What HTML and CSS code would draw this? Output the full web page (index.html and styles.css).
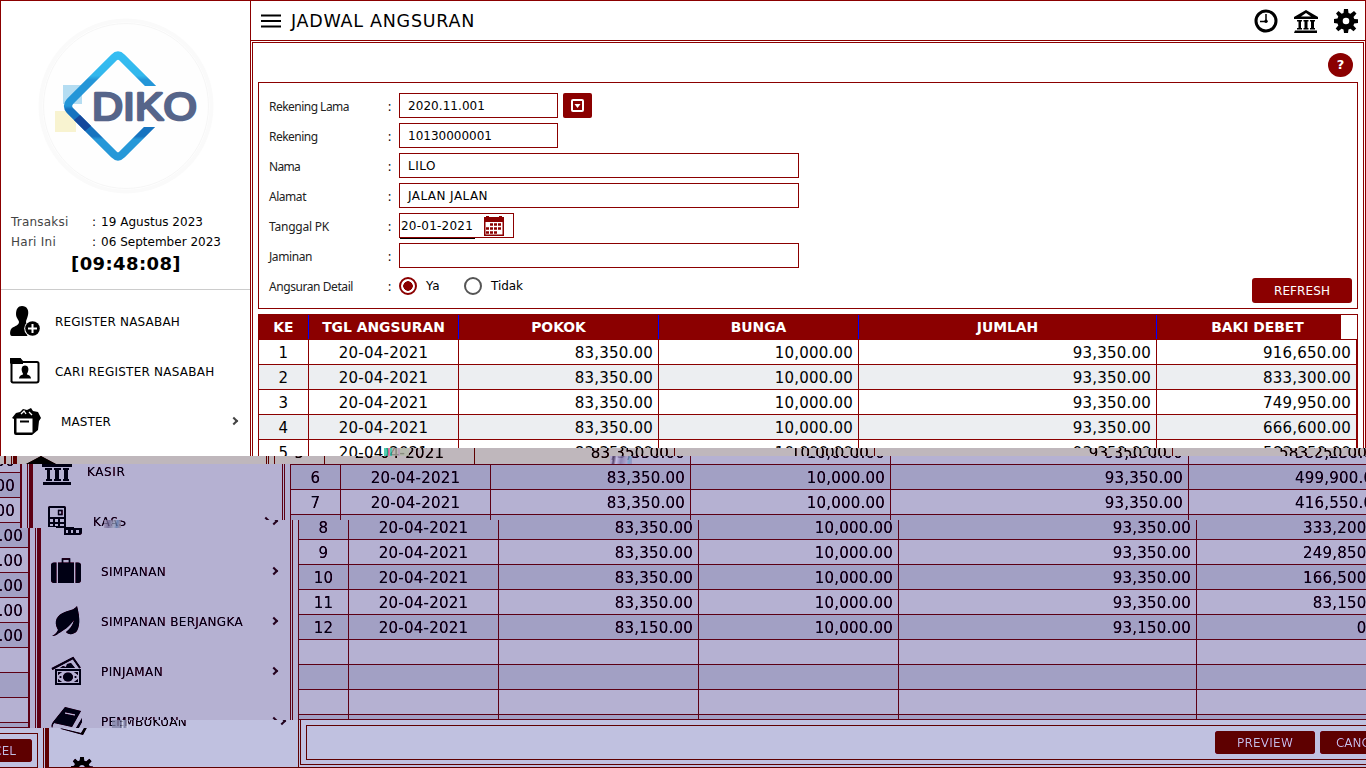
FILE: index.html
```html
<!DOCTYPE html>
<html lang="id">
<head>
<meta charset="utf-8">
<title>Jadwal Angsuran</title>
<link rel="stylesheet" href="styles.css">
</head>
<body>
<svg class="defs" width="0" height="0">
  <filter id="grey" color-interpolation-filters="sRGB" x="0" y="0" width="1" height="1"><feComponentTransfer><feFuncR type="table" tableValues="0 .12 .34 .5 .75"/><feFuncG type="table" tableValues="0 0 .22 .47 .72"/><feFuncB type="table" tableValues="0 0 .24 .49 .74"/></feComponentTransfer></filter>
  <filter id="violet" color-interpolation-filters="sRGB" x="0" y="0" width="1" height="1"><feComponentTransfer><feFuncR type="table" tableValues="0 .12 .34 .46 .71"/><feFuncG type="table" tableValues="0 0 .2 .445 .695"/><feFuncB type="table" tableValues="0.08 .1 .33 .575 .825"/></feComponentTransfer></filter>
  <filter id="pale" color-interpolation-filters="sRGB" x="0" y="0" width="1" height="1"><feComponentTransfer><feFuncR type="table" tableValues="0 .12 .34 .51 .755"/><feFuncG type="table" tableValues="0 0 .26 .51 .76"/><feFuncB type="table" tableValues="0 .1 .38 .63 .88"/></feComponentTransfer></filter>
</svg>
<main class="wall"></main>

<template id="screen">
<div class="screen">
  <aside class="side">
    <svg class="logo" viewBox="1 1 249 210">
      <defs>
        <clipPath id="cut"><path d="M50 40H170V86H120V127H170V175H50Z"/></clipPath>
        <linearGradient id="blue" x1="0" y1="0" x2="0" y2="1"><stop offset="0" stop-color="#35bdf2"/><stop offset=".2" stop-color="#32b7ec"/><stop offset=".24" stop-color="#2496d8"/><stop offset=".5" stop-color="#2496d8"/><stop offset=".53" stop-color="#1673bf"/><stop offset=".8" stop-color="#1673bf"/><stop offset=".83" stop-color="#2698d8"/><stop offset="1" stop-color="#2698d8"/></linearGradient>
      </defs>
      <circle cx="126" cy="106" r="85.500" fill="none" stroke="#fafafa" stroke-width="4"/>
      <circle cx="126" cy="106" r="82.500" fill="#fefefe" stroke="#f6f6f6" stroke-width="1"/>
      <rect x="63" y="85" width="19" height="19" fill="#b5ddf2"/>
      <rect x="55" y="111" width="21" height="21" fill="#f8f3d0"/>
      <g clip-path="url(#cut)">
        <path d="M114 57.500Q118 53.500 122 57.500L166 101.500Q170 106 166 110.500L122 154.500Q118 158.500 114 154.500L70 110.500Q66 106 70 101.500Z" fill="none" stroke="url(#blue)" stroke-width="8"/>
        <path d="M74 120l6-5 11 11-6 5z" fill="#14479c"/>
      </g>
      <text class="t brand" x="92" y="120" textLength="105" lengthAdjust="spacingAndGlyphs">DIKO</text>
    </svg>
    <div class="info"><span class="t dim" data-w="57.500">Transaksi</span><span class="t">:</span><span class="t" data-w="102">19 Agustus 2023</span></div>
    <div class="info"><span class="t dim" data-w="45">Hari Ini</span><span class="t">:</span><span class="t" data-w="120">06 September 2023</span></div>
    <div class="time"><span class="t" data-w="110">[09:48:08]</span></div>
    <nav class="menu">
      <div class="item"><svg viewBox="0 0 30 30"><path d="M12 0c5 0 7 4 6 9-.5 3-2 5-2 7 0 2 4 3 6 5l-5 9H2c-3 0-2-7 0-8 3-2 7-3 7-6 0-2-3-4-3-8 0-5 2-8 6-8z"/><circle cx="22.500" cy="22.500" r="8.300" fill="#fff"/><circle cx="22.500" cy="22.500" r="7.300"/><path d="M22.500 18v9M18 22.500h9" stroke="#fff" stroke-width="2"/></svg><span class="t" data-w="125">REGISTER NASABAH</span></div>
      <div class="item"><svg viewBox="0 0 30 30"><path d="M1.500 26V4q0-1 1-1H10l2.500 3H27q1.500 0 1.500 1.500V24.500q0 2-2 2H3q-1.500 0-1.500-2" fill="none" stroke="#000" stroke-width="2"/><path d="M0 7V2h10l3 4v2H1z"/><path d="M15 9.500c3 0 4 3 3 6-.5 2-1.500 2-1 3 2 .8 4 1.500 4 4H9c0-2.500 2-3.200 4-4 .5-1-.5-1-1-3-1-3 0-6 3-6z"/></svg><span class="t" data-w="159.500">CARI REGISTER NASABAH</span></div>
      <div class="item sub"><svg viewBox="0 0 30 30"><path d="M1 12l4-5 4-1 3-3 4 1 4-2 2 3 5 1 3 6-2 3-1 9-6 5H5Q3 29 3 27V13z"/><path d="M10 8l3-3 2 3M18 6l3 3" stroke="#fff" fill="none" stroke-width="1.300"/><path d="M5.500 12.500H21.500V26.500H5.500z" fill="#fff"/><path d="M9 14.500h9v2H9z"/></svg><span class="t" data-w="50">MASTER</span><i class="chev"></i></div>
      <div class="item"><svg viewBox="0 0 30 30"><path d="M15 0L30 8v3H0V8zM3 12h7v2H8v9h2v2H4v-2h1v-9H3zM12 12h7v2h-2v9h2v2h-7v-2h1v-9h-1zM21 12h6v2h-1v9h1v2h-6v-2h1v-9h-1zM1 26h28v3H1z"/></svg><span class="t" data-w="38.500">KASIR</span></div>
      <div class="item sub"><svg viewBox="0 0 30 30"><path d="M5 1.500Q5 0 7 0H21Q23 0 23 2V21H31V26Q31 29 28 29H13V21H5z"/><path d="M7 2H21V11H7z" fill="#fff"/><path d="M15.500 4.500h3.500v4h-3.500z" fill="#fff" stroke="#000" stroke-width="1.300"/><path d="M7 13h3v3H7zm5 0h3v3h-3zm5 0h4v3h-4zM7 18h3v2H7zm5 0h3v2h-3zm5 0h4v2h-4zM15 24h2v3h-2zm5 0h2v3h-2zm5 0h3v3h-3z" fill="#fff"/></svg><span class="t" data-w="26">KAS</span><i class="chev"></i></div>
      <div class="item sub"><svg viewBox="0 0 30 30"><path d="M11.500 7V3h7v4" fill="none" stroke="#000" stroke-width="1.500"/><path d="M3 6.500H5.500V27H3Q0 27 0 24V9.500Q0 6.500 3 6.500zM7 6.500H23V27H7zM24.500 6.500H27Q30 6.500 30 9.500V24Q30 27 27 27H24.500z"/></svg><span class="t" data-w="65">SIMPANAN</span><i class="chev"></i></div>
      <div class="item sub"><svg viewBox="0 0 30 30"><path d="M26 0C28 8 30 18 26 25 23 29 17 29 15 26 19 23 22 19 23 14 18 21 12 25 8 27 6 29 4 30 1 30 5 28 6 26 7 24 2 15 6 9 14 6 19 4 23 4 26 0z"/></svg><span class="t" data-w="142">SIMPANAN BERJANGKA</span><i class="chev"></i></div>
      <div class="item sub"><svg viewBox="0 0 30 30"><path d="M1 13L22 2l7 10" fill="none" stroke="#000" stroke-width="2"/><path d="M9 12l3-2 3 1 1-3 4-1 4 5z"/><path d="M4 13H30V29H4z"/><path d="M6 15H28V27H6z" fill="#fff"/><path d="M7 16h4l-4 3zM27 16h-4l4 3zM7 26h4l-4-3zM27 26h-4l4-3z"/><ellipse cx="17" cy="21" rx="5" ry="4.500"/><circle cx="9.500" cy="21" r="1"/><circle cx="24.500" cy="21" r="1"/></svg><span class="t" data-w="62">PINJAMAN</span><i class="chev"></i></div>
      <div class="item sub"><svg viewBox="0 0 30 30"><path d="M14 1L30 5 21 21 3 17 1 22 22 27 31 12v4L24 29 2 23Q-1 20 2 16z"/><path d="M14 7l10 2" stroke="#fff" stroke-width="1.500"/><path d="M2 19l19 5 9-14" fill="none" stroke="#fff" stroke-width="1.500"/></svg><span class="t" data-w="78">PEMBUKUAN</span><i class="chev"></i></div>
      <div class="item gearitem"><svg viewBox="0 0 24 24"><use href="#gear"/></svg></div>
    </nav>
  </aside>
  <section class="main">
    <header class="top">
      <svg class="burger" viewBox="0 0 20 14"><path d="M0 1.500h20M0 7h20M0 12.500h20" stroke="#000" stroke-width="2"/></svg>
      <h1 class="t" data-w="184">JADWAL ANGSURAN</h1>
      <div class="tools">
        <svg viewBox="0 0 24 24"><circle cx="12" cy="12" r="10" fill="none" stroke="#000" stroke-width="3"/><path d="M12 5v7.500H6" fill="none" stroke="#000" stroke-width="1.500"/><circle cx="12" cy="12.300" r="1.700"/></svg>
        <svg viewBox="0 0 24 24"><path fill-rule="evenodd" d="M12 1L24 8v2H0V8zM12 4L7 7.500H17zM3 11h5v1.500H7V19h1v1.500H3V19h1.500v-6.500H3zM9.500 11h5v1.500h-1V19h1v1.500h-5V19h1v-6.500h-1zM16 11h5v1.500h-1V19h1v1.500h-5V19h1v-6.500h-1zM1 21.500h22V24H0z"/></svg>
        <svg viewBox="0 0 24 24"><g id="gear"><path fill-rule="evenodd" d="M10 0h4l.5 4 2 .8L20 2l2.500 2.500L19.500 8l.8 2 3.700.3v3.800l-3.800.5-.8 2 2.800 3-2.700 2.700-3-2.500-2 .8L14 24h-4l-.5-3.500-2-.8-3.200 2.500L1.700 19.500l2.600-3-.8-2L0 14v-4l3.500-.5.8-2L2 4.500 4.500 2 7.600 4.700l1.900-.8zM12 8.700a3.300 3.300 0 1 0 0 6.600a3.300 3.300 0 0 0 0-6.600z"/></g></svg>
      </div>
    </header>
    <div class="pane">
      <div class="helpbar"><b class="help t">?</b></div>
      <div class="form">
        <div class="field"><label class="t" data-w="80">Rekening Lama</label><span class="t colon">:</span><div class="box short"><span class="t" data-w="77">2020.11.001</span></div><div class="pick"><svg viewBox="0 0 13 13"><rect x="1" y="1" width="11" height="11" rx="1" fill="none" stroke="#fff" stroke-width="2"/><path d="M3.500 5h6l-3 4z" fill="#fff"/></svg></div></div>
        <div class="field"><label class="t" data-w="48.500">Rekening</label><span class="t colon">:</span><div class="box short"><span class="t" data-w="84">10130000001</span></div></div>
        <div class="field"><label class="t" data-w="31">Nama</label><span class="t colon">:</span><div class="box"><span class="t" data-w="28">LILO</span></div></div>
        <div class="field"><label class="t" data-w="37">Alamat</label><span class="t colon">:</span><div class="box"><span class="t" data-w="80">JALAN JALAN</span></div></div>
        <div class="field"><label class="t" data-w="60">Tanggal PK</label><span class="t colon">:</span><div class="box date"><span class="t" data-w="72">20-01-2021</span><svg viewBox="0 0 20 20"><path d="M0 1h2V0h3v1h10V0h3v1h2v19H0z" fill="#8b0000"/><path d="M1.500 6h17v12.500h-17z" fill="#fff"/><path d="M6 8.500h12M2 12.500h16M2 16.500h12" stroke="#8b0000" stroke-width="2.600" stroke-dasharray="3 1"/></svg></div></div>
        <div class="field"><label class="t" data-w="43">Jaminan</label><span class="t colon">:</span><div class="box"></div></div>
        <div class="field"><label class="t" data-w="84">Angsuran Detail</label><span class="t colon">:</span><i class="radio on"></i><span class="t opt first" data-w="14">Ya</span><i class="radio"></i><span class="t opt" data-w="32">Tidak</span></div>
        <div class="btn refresh"><span class="t" data-w="56">REFRESH</span></div>
      </div>
      <div class="grid">
        <div class="head"><b class="t">KE</b><b class="t">TGL ANGSURAN</b><b class="t">POKOK</b><b class="t">BUNGA</b><b class="t">JUMLAH</b><b class="t">BAKI DEBET</b><i></i></div>
        <div class="rows"></div>
      </div>
      <footer class="foot"><div class="btn preview"><span class="t" data-w="56">PREVIEW</span></div><div class="btn cancel"><span class="t" data-w="48">CANCEL</span></div></footer>
    </div>
  </section>
</div>
</template>
<script src="app.js"></script>
</body>
</html>
```

FILE: styles.css
```css
* { box-sizing: border-box; }
body { margin: 0; background: #fff; overflow: hidden; }
.defs { position: absolute; }
.wall { display: flex; flex-wrap: wrap; width: 1366px; height: 768px; overflow: hidden; align-content: flex-start; }
.tile { position: relative; overflow: hidden; flex: none; }
.tile.grey { filter: url(#grey); }
.tile.violet { filter: url(#violet); }
.tile.pale { filter: url(#pale); }
.tile > .screen { position: absolute; }
.blip { position: absolute; height: 8px; opacity: .75; }
.blip.a { left: 384px; top: 448px; width: 25px; background: linear-gradient(90deg, #2ed3ac 0 15%, #e8679b 15% 25%, #35c8b0 25% 33%, #b9b9b0 33% 55%, #b79bb9 55% 65%, #b3bba8 65%); }
.blip.b { left: 610px; top: 456px; width: 22px; background: linear-gradient(100deg, #b0a4d5 0 10%, #332055 18%, #cfc4f0 30%, #8075a8 50%, #aaa0cc 75%, #68a0ca 85%, #9888bb); }
.blip.c { left: 104px; top: 520px; width: 17px; background: linear-gradient(100deg, #a797ba, #665c8a 30%, #9fa5bd 60%, #5877ad 75%, #a28d9a); }
.blip.d { left: 112px; top: 720px; width: 16px; background: linear-gradient(90deg, #8286a8 0 50%, #30305a 55%, #d8dcf0 65%, #62658d 80%, #e5e8f5); }

.screen { display: grid; grid-template-columns: 251px 1fr; width: 1368px; height: 768px; background: #fff; border-right: 3px solid #8b0000; color: #000; font: 12px "DejaVu Sans", Verdana, sans-serif; fill: #000; }
.t { white-space: nowrap; }
.side { height: 768px; overflow: hidden; border: 1px solid #8b0000; }
.logo { display: block; width: 249px; height: 210px; }
.brand { font: 38px "Liberation Sans", Arial, sans-serif; fill: #56658a; stroke: #56658a; stroke-width: 2.600; stroke-linejoin: round; }
.info { display: grid; grid-template-columns: 81px 9px 1fr; height: 20px; line-height: 23px; padding-left: 10px; }
.dim { color: #444; }
.info .t, .time .t { justify-self: start; }
.time { height: 39px; line-height: 25px; font-size: 18px; font-weight: bold; padding-left: 70px; border-bottom: 1px solid #ccc; }
.menu { padding-top: 6px; }
.item { display: flex; align-items: center; height: 50px; padding-left: 9px; }
.item .t { padding-top: 2px; }
.item svg { width: 30px; height: 30px; margin-right: 15px; flex: none; overflow: visible; }
.item.sub svg { margin: 0 20px 0 1px; }
.chev { width: 6px; height: 6px; border: solid #444; border-width: 2px 2px 0 0; transform: rotate(45deg); margin: 0 13px 0 auto; }
.gearitem { padding: 0 0 7px 22px; }
.gearitem svg { width: 22px; height: 22px; }

.main { display: flex; flex-direction: column; height: 768px; border-top: 1px solid #8b0000; border-bottom: 1px solid #8b0000; padding-bottom: 2px; }
.top { display: flex; align-items: center; height: 40px; flex: none; border-bottom: 1px solid #8b0000; padding: 0 7px 0 10px; }
.burger { width: 20px; height: 14px; margin: 1px 10px 0 0; }
.top h1 { margin: 0; font: 17.500px "DejaVu Sans", Verdana, sans-serif; }
.tools { display: flex; gap: 16px; margin: 1px 0 0 auto; }
.tools svg { width: 24px; height: 24px; }
.pane { flex: 1; margin: 1px 1px 0; border: 1px solid #8b0000; padding: 0 5px; }
.helpbar { display: flex; justify-content: flex-end; height: 39px; padding: 10px 5px 0 0; }
.help { width: 25px; height: 24px; border-radius: 50%; background: #8b0000; color: #fff; font-size: 13px; line-height: 24px; text-align: center; }
.form { position: relative; height: 227px; border: 1px solid #8b0000; padding: 10px; }
.field { display: flex; height: 30px; }
.field label { width: 119px; flex: none; font: 12px/28px "Noto Sans", sans-serif; color: #222; }
.colon { width: 11px; flex: none; font: 12px/28px "Noto Sans", sans-serif; }
.box { width: 400px; height: 25px; border: 1px solid #8b0000; line-height: 25px; padding-left: 8px; }
.box.short { width: 159px; }
.box.date { display: flex; width: 115px; padding-left: 1px; position: relative; }
.box.date::after { content: ""; position: absolute; left: 0; bottom: -2px; width: 75px; height: 1px; background: #000; }
.box.date svg { width: 20px; height: 20px; margin: 2px 0 0 11px; }
.pick { width: 29px; height: 25px; margin-left: 5px; background: #8b0000; border-radius: 2px; display: grid; place-items: center; }
.pick svg { width: 13px; height: 13px; }
.radio { width: 18px; height: 18px; margin: 4px 0 0; border: 2px solid #555; border-radius: 50%; flex: none; }
.radio.on { border-color: #8b0000; background: radial-gradient(circle, #8b0000 4.500px, transparent 5px); }
.opt { line-height: 27px; margin-left: 9px; }
.opt.first { width: 38px; margin-right: -9px; }
.opt.first + .radio { margin-left: 9px; }
.btn { display: grid; place-items: center; background: #8b0000; border-radius: 3px; color: #fff; font-size: 12px; }
.refresh { position: absolute; right: 5px; bottom: 5px; width: 100px; height: 25px; }
.grid { height: 406px; margin-top: 5px; overflow: hidden; border-bottom: 1px solid #8b0000; }
.head, .row { display: grid; height: 25px; border-left: 1px solid #8b0000; }
.head { grid-template-columns: 50px 150px 200px 200px 298px 184px 1fr; border-top: 1px solid #8b0000; }
.head b { height: 24px; background: #8b0000; color: #fff; text-align: center; line-height: 25px; font-size: 13.900px; border-right: 1px solid #00f; }
.head b:nth-child(6) { border: 0; padding-left: 17px; }
.head i { border-right: 1px solid #8b0000; }
.rows { border-top: 1px solid #8b0000; }
.row { grid-template-columns: 50px 150px 200px 200px 298px 1fr; border-right: 1px solid #8b0000; }
.row:nth-child(even) { background: #eceef1; }
.row span { height: 25px; padding: 1px 5px 0 0; border-right: 1px solid #8b0000; border-bottom: 1px solid #8b0000; text-align: right; line-height: 25px; font-size: 15px; letter-spacing: .22px; }
.row span:nth-child(-n+2) { padding-right: 0; text-align: center; }
.foot { display: flex; justify-content: flex-end; gap: 5px; height: 35px; margin-top: 5px; padding: 5px 5px 0; border: 1px solid #8b0000; }
.foot .btn { height: 23px; }
.preview { width: 100px; }
.cancel { width: 80px; }
```

FILE: app.js
```js
const wall = document.querySelector('.wall');
const source = document.getElementById('screen');

const balances = ['916,650.00', '833,300.00', '749,950.00', '666,600.00', '583,250.00', '499,900.00',
  '416,550.00', '333,200.00', '249,850.00', '166,500.00', '83,150.00', '0.00'];
const rows = balances.map((b, i) => [i + 1, '20-04-2021', i === 11 ? '83,150.00' : '83,350.00',
  '10,000.00', i === 11 ? '93,150.00' : '93,350.00', b]);
while (rows.length < 16) rows.push(['', '', '', '', '', '']);
source.content.querySelector('.rows').innerHTML = rows
  .map(r => '<div class="row">' + r.map(c => `<span class="t">${c}</span>`).join('') + '</div>').join('');

// x, y, width, height, horizontal shift, tint
const tiles = [
  [0, 0, 1366, 448, 0, ''],
  [0, 448, 384, 8, 0, ''], [384, 448, 982, 8, 16, 'grey'],
  [0, 456, 616, 8, 16, 'grey'], [616, 456, 750, 8, 32, 'violet'],
  [0, 464, 1366, 56, 32, 'violet'],
  [0, 520, 112, 8, 32, 'violet'], [112, 520, 1254, 8, 40, 'violet'],
  [0, 528, 1366, 192, 40, 'violet'],
  [0, 720, 120, 8, 40, 'violet'], [120, 720, 1246, 8, 48, 'pale'],
  [0, 728, 1366, 40, 48, 'pale']
];

function fit(el) {
  const range = document.createRange();
  range.selectNodeContents(el);
  const gap = Number(el.dataset.w) - range.getBoundingClientRect().width;
  el.style.letterSpacing = gap / el.textContent.length + 'px';
}

// Places one copy of the screen and drops whatever falls outside the tile.
function place(tile, x, y) {
  const screen = source.content.firstElementChild.cloneNode(true);
  screen.style.left = x + 'px';
  screen.style.top = y + 'px';
  tile.append(screen);
  screen.querySelectorAll('[data-w]').forEach(fit);
  const box = tile.getBoundingClientRect();
  const gone = [...screen.querySelectorAll('.t')].filter(el => {
    const range = document.createRange();
    range.selectNodeContents(el);
    const r = range.getBoundingClientRect();
    return r.bottom - 3 <= box.top || r.top + 3 >= box.bottom || r.right <= box.left || r.left >= box.right;
  });
  gone.forEach(el => { el.textContent = ''; });
}

for (const [x, y, w, h, shift, tint] of tiles) {
  const tile = document.createElement('div');
  tile.className = 'tile ' + tint;
  tile.style.width = w + 'px';
  tile.style.height = h + 'px';
  wall.append(tile);
  place(tile, shift - x, -y);
  if (x < shift) place(tile, shift - 1368 - x, 8 - y);
}
for (const name of 'abcd') {
  const blip = document.createElement('i');
  blip.className = 'blip ' + name;
  wall.append(blip);
}
```
